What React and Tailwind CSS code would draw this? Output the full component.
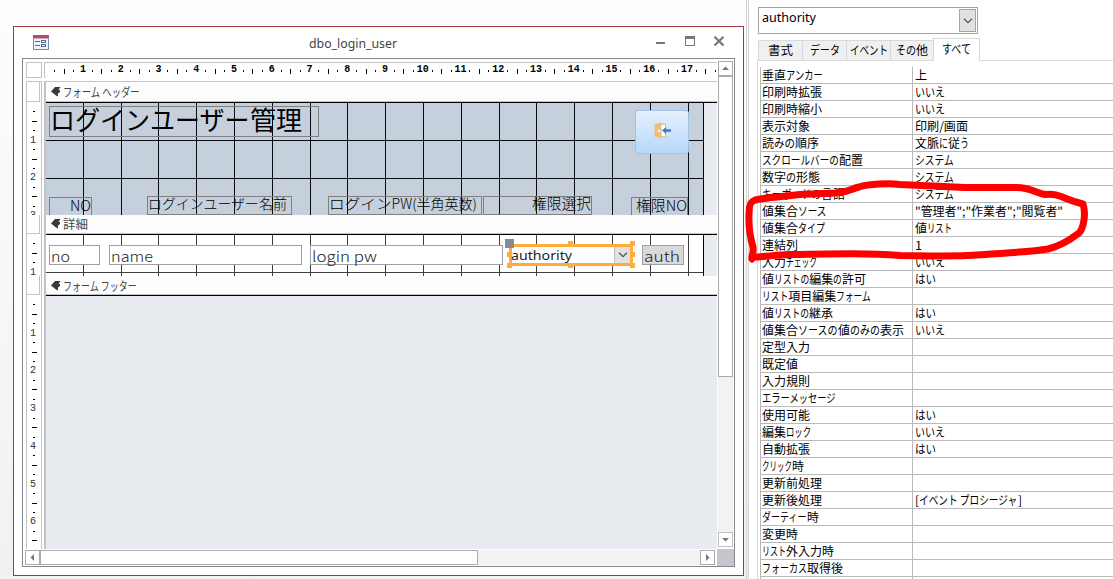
const JP = '"Noto Sans CJK JP"'
const UI = '"Noto Sans"'

const ctx = document.createElement("canvas").getContext("2d")

// Text squeezed to a width: kana are narrowed first, kanji keep their size
const Fit = ({ text, w, size = 12, weight = 400, font = JP, className = "" }) => {
    ctx.font = `${weight} ${size}px ${font}, "Noto Sans CJK JP", sans-serif`
    const parts = text.match(/[\u3040-\u30ff ]+|[^\u3040-\u30ff ]+/g).map((t) => ({
        t,
        kana: /[\u3040-\u30ff]/.test(t),
        w: ctx.measureText(t).width,
    }))
    const mixed = parts.some((p) => p.kana) && parts.some((p) => !p.kana)
    const runs = mixed ? parts : [{ t: text, kana: true, w: ctx.measureText(text).width }]
    const kana = runs.reduce((s, p) => s + (p.kana ? p.w : 0), 0)
    const rest = runs.reduce((s, p) => s + (p.kana ? 0 : p.w), 0)
    const k = (w - rest) / kana
    return <span className={`flex whitespace-pre ${className}`} style={{ width: w, fontSize: size, fontWeight: weight, fontFamily: `${font}, "Noto Sans CJK JP", sans-serif` }}>
        {runs.map((p, i) => (
            <span key={i} className="block shrink-0" style={{ width: p.kana ? p.w * k : p.w }}>
                <span className="block origin-left" style={{ width: p.w, transform: p.kana ? `scaleX(${k})` : "none" }}>{p.t}</span>
            </span>
        ))}
    </span>
}

const HRuler = () => {
    return <div className="flex h-full pl-[5px]">
        {Array.from({ length: 71 }, (_, i) => {
            const q = (i + 1) % 4
            return <div key={i} className="w-[9.449px] shrink-0 flex items-center justify-center">
                {q === 0 && <span className="font-['Liberation_Mono'] text-[10px] leading-none text-black font-bold -mt-px">{(i + 1) / 4}</span>}
                {q === 2 && <span className="w-px h-[5px] bg-black mt-px" />}
                {q % 2 === 1 && <span className="w-px h-[2px] bg-black" />}
            </div>
        })}
    </div>
}

const VRuler = ({ marks }) => {
    return <div className="flex flex-col pt-[4.2px] h-full overflow-hidden">
        {Array.from({ length: marks }, (_, i) => {
            const q = (i + 1) % 4
            return <div key={i} className="h-[9.449px] shrink-0 flex items-center pl-[5px]">
                {q === 0 && <span className="font-['Liberation_Mono'] text-[10px] leading-none text-[#333] -ml-[2px] mt-px">{(i + 1) / 4}</span>}
                {q === 2 && <span className="w-[5px] h-px bg-black" />}
                {q % 2 === 1 && <span className="w-[2px] h-px bg-black ml-px" />}
            </div>
        })}
    </div>
}

const SectionGutter = ({ className, body, marks }) => {
    return <>
        <div className={`shrink-0 pb-px pr-px ${className}`}>
            <div className="h-full border-r border-b border-[#c3c3c3]" />
        </div>
        <div className={`shrink-0 ${body}`}><VRuler marks={marks} /></div>
    </>
}

const SectionBar = ({ text, w, className }) => {
    return <div className={`shrink-0 flex items-center bg-[#fdfdfd] border-b border-black shadow-[inset_0_-1px_#c3c3c3] pl-[5px] ${className}`}>
        <svg width="10" height="10" viewBox="0 0 10 10" className="mr-[2px]">
            <path d="M0 4.500 4 0H9.500L7.500 3H9V5L7 6.500V9.500L5 8.500z" fill="#3b3b3b" />
        </svg>
        <Fit text={text} w={w} className="text-[#444] leading-[16px]" />
    </div>
}

const Grid = ({ h, rows, color }) => {
    return <svg width="658" height={h} className="absolute left-0 top-0" shapeRendering="crispEdges">
        {Array.from({ length: 17 }, (_, i) => (
            <rect key={i} x={Math.floor(45.5 + 37.795 * (i + 1)) - 46} y="0" width="1" height={h} fill={color} />
        ))}
        {rows.map((y) => <rect key={y} x="0" y={y} width="658" height="1" fill={color} />)}
        <rect x="657" y="0" width="1" height={h} fill="#000" />
    </svg>
}

const Arrow = ({ d }) => {
    return <svg width="7" height="7" viewBox="0 0 7 7"><path d={d} fill="#777" /></svg>
}

const Chevron = () => {
    return <svg width="10" height="6" viewBox="0 0 10 6"><path d="M1 .8 5 4.6 9 .8" fill="none" stroke="#555" strokeWidth="1.3" /></svg>
}

const TitleBar = () => {
    return <div className="h-[31px] shrink-0 flex items-start pt-[7px]">
        <svg width="16" height="15" viewBox="0 0 16 15" className="ml-[19px] mt-px" shapeRendering="crispEdges">
            <rect x=".5" y=".5" width="15" height="14" fill="#eef3fa" stroke="#7188a8" />
            <rect width="16" height="3" fill="#b84a6e" />
            <rect y="3" width="16" height="1" fill="#dba5b9" />
            <path d="M2 6h5v1H2zM2 10h5v1H2z" fill="#4c6a98" />
            <path d="M8.500 5.500h4v2h-4zM8.500 9.500h4v2h-4z" fill="#fff" stroke="#4c6a98" />
        </svg>
        <Fit text="dbo_login_user" w={88} size={13} font={UI} className="ml-[260px] leading-[18px] text-[#444]" />
        <svg width="70" height="12" viewBox="0 0 70 12" className="ml-[259px] mt-[2px]" shapeRendering="crispEdges">
            <path d="M0 6h9v2H0z" fill="#777" />
            <path d="M29 0h10v10H29zM30 3v6h8V3z" fill="#777" fillRule="evenodd" />
            <path d="m58.500 .8 9 8.700m0-8.700-9 8.700" stroke="#777" strokeWidth="2.200" fill="none" shapeRendering="auto" />
        </svg>
    </div>
}

const FormHeader = () => {
    return <div className="relative h-[112px] shrink-0 bg-[#e8ebf0] overflow-hidden">
        <div className="w-[658px] h-full bg-[#c5d0dc]" />
        <Grid h={112} rows={[37, 75]} color="#050c14" />
        <div className="absolute left-[3px] top-[3px] w-[270px] h-[31px] border border-[#808080]">
            <Fit text="ログインユーザー管理" w={252} size={26} className="leading-[29px] -mt-[3px] text-black" />
        </div>
        <div className="absolute left-[3px] top-[94px] w-[43px] h-[22px] border border-[#808080] flex justify-end">
            <Fit text="NO" w={21} size={14.500} weight={300} className="leading-[14px]" />
        </div>
        <div className="absolute left-[101px] top-[93px] w-[145px] h-[19px] border border-[#808080]">
            <Fit text="ログインユーザー名前" w={139} size={14} weight={300} className="leading-[14px] -mt-px" />
        </div>
        <div className="absolute left-[282px] top-[93px] w-[154px] h-[19px] border border-[#808080]">
            <Fit text="ログインPW(半角英数)" w={148} size={14} weight={300} className="leading-[14px] -mt-px" />
        </div>
        <div className="absolute left-[437px] top-[93px] w-[109px] h-[19px] border border-[#808080] flex justify-end">
            <Fit text="権限選択" w={59} size={14.500} weight={300} className="leading-[14px] -mt-px" />
        </div>
        <div className="absolute left-[585px] top-[94px] w-[57px] h-[22px] border border-[#808080] flex justify-end">
            <Fit text="権限NO" w={51} size={14.500} weight={300} className="leading-[14px]" />
        </div>
        <div className="absolute left-[589px] top-[7px] w-[54px] h-[44px] rounded-[3px] border border-[#9dc3e8] bg-linear-to-b from-[#e6f0fd] to-[#b5d8fb] flex items-center justify-center">
            <svg width="17" height="17" viewBox="0 0 17 17" className="-mt-[3px]">
                <path d="M7 2.500h4.500v3M7 14h4.500v-3" fill="#fff" stroke="#eabf7c" strokeWidth="1.400" />
                <path d="M7 3h4v11H7z" fill="#fff" />
                <path d="M.5 2 7.500.5v16L.5 14.500z" fill="#eabf7c" />
                <rect x="4" y="8" width="2" height="2" fill="#fff" />
                <path d="M8 8.500 12 5v2.300h5v2.500h-5V12z" fill="#4079b5" />
            </svg>
        </div>
    </div>
}

const Field = ({ text, w, className }) => {
    return <div className={`absolute top-[10px] h-[20px] border border-[#a0a0a0] pl-px ${className}`}>
        <Fit text={text} w={w} size={14.500} weight={300} className="leading-[20px] text-[#222]" />
    </div>
}

const Handle = ({ className }) => {
    return <div className={`absolute size-[5px] bg-[#ffab3d] ${className}`} />
}

const Detail = () => {
    return <div className="relative h-[41px] shrink-0 bg-[#e8ebf0] overflow-hidden">
        <div className="w-[658px] h-full bg-white" />
        <Grid h={41} rows={[37]} color="#3c3c3c" />
        <Field text="no" w={19} className="left-[3px] w-[51px] bg-white" />
        <Field text="name" w={42} className="left-[63px] w-[193px] bg-white" />
        <Field text="login pw" w={65} className="left-[264px] w-[193px] bg-white" />
        <Field text="auth" w={36} className="left-[596px] w-[42px] bg-[#d9d9d9]" />
        <div className="absolute left-[463px] top-[9px] w-[124px] h-[22px] border-3 border-[#ffab3d] bg-white flex justify-between">
            <Fit text="authority" w={61} size={12.500} font={UI} className="leading-[17px] -ml-px text-[#222]" />
            <div className="w-[16px] bg-[#e1e1e1] border-l border-[#c0c0c0] flex items-center justify-center"><Chevron /></div>
        </div>
        <Handle className="left-[522px] top-[6px]" />
        <Handle className="left-[584px] top-[6px]" />
        <Handle className="left-[461px] top-[17px]" />
        <Handle className="left-[584px] top-[17px]" />
        <Handle className="left-[461px] top-[28px]" />
        <Handle className="left-[522px] top-[28px]" />
        <Handle className="left-[584px] top-[28px]" />
        <div className="absolute left-[459px] top-[4px] size-[9px] bg-[#858b94]" />
    </div>
}

const FormWindow = () => {
    return <div className="w-[731px] h-[550px] mt-[26px] ml-[13px] shrink-0 bg-white border border-[#a4373a] flex flex-col">
        <TitleBar />
        <div className="ml-[8px] w-[713px] h-[509px] border border-[#83888f]">
            <div className="flex h-[490px]">
                <div className="w-[694px] shrink-0 flex flex-col">
                    <div className="flex h-[22px] pt-[3px] pl-[3px] shrink-0">
                        <div className="size-[16px] shrink-0 border border-[#c3c3c3] mr-[2px]" />
                        <div className="w-[673px] h-[16px] border-t border-l border-[#c3c3c3]"><HRuler /></div>
                    </div>
                    <div className="flex h-[468px] pl-[3px]">
                        <div className="w-[16px] shrink-0 border-x border-[#c3c3c3] mr-[2px] flex flex-col">
                            <SectionGutter className="h-[22px] border-t border-[#c3c3c3]" body="h-[112px]" marks={12} />
                            <SectionGutter className="h-[20px]" body="h-[41px]" marks={4} />
                            <SectionGutter className="h-[20px]" body="h-[252px]" marks={26} />
                        </div>
                        <div className="w-[673px] shrink-0 border-l-2 border-[#c3c3c3] flex flex-col">
                            <SectionBar text="フォーム ヘッダー" w={77} className="h-[22px] border-t border-t-[#c3c3c3]" />
                            <FormHeader />
                            <SectionBar text="詳細" w={25} className="h-[20px] pb-px" />
                            <Detail />
                            <SectionBar text="フォーム フッター" w={74} className="h-[20px]" />
                            <div className="grow bg-[#e8ebf0]" />
                        </div>
                    </div>
                </div>
                <div className="w-[15px] ml-px mt-[2px] h-[486px] bg-[#f2f2f2] flex flex-col">
                    <div className="h-[15px] border border-[#ababab] bg-white flex items-center justify-center"><Arrow d="M0 5 3.500 1.500 7 5z" /></div>
                    <div className="h-[301px] border border-[#ababab] bg-white" />
                    <div className="h-[15px] mt-auto border border-[#c0c0c0] bg-white flex items-center justify-center"><Arrow d="M0 2 3.500 5.500 7 2z" /></div>
                </div>
            </div>
            <div className="flex h-[17px]">
                <div className="w-[690px] h-[15px] ml-[2px] mt-px mr-[2px] bg-[#f2f2f2] flex">
                    <div className="w-[15px] border border-[#ababab] bg-white flex items-center justify-center"><Arrow d="M5 0 1.500 3.500 5 7z" /></div>
                    <div className="w-[438px] border border-[#ababab] bg-white" />
                    <div className="w-[15px] ml-auto border border-[#ababab] bg-white flex items-center justify-center"><Arrow d="M2 0 5.500 3.500 2 7z" /></div>
                </div>
                <div className="w-[17px] bg-[#c4c6cb]" />
            </div>
        </div>
    </div>
}

const rows = [
    ["垂直アンカー", 61, "上", 12],
    ["印刷時拡張", 60, "いいえ", 30],
    ["印刷時縮小", 60, "いいえ", 30],
    ["表示対象", 48, "印刷/画面", 53],
    ["読みの順序", 57, "文脈に従う", 54],
    ["スクロールバーの配置", 101, "システム", 39],
    ["数字の形態", 58, "システム", 39],
    ["キーボードの言語", 83, "システム", 39],
    ["値集合ソース", 65, "\"管理者\";\"作業者\";\"閲覧者\"", 148],
    ["値集合タイプ", 63, "値リスト", 37],
    ["連結列", 36, "1", 7],
    ["入力チェック", 55, "いいえ", 30],
    ["値リストの編集の許可", 104, "はい", 21],
    ["リスト項目編集フォーム", 109, "", 0],
    ["値リストの継承", 71, "はい", 21],
    ["値集合ソースの値のみの表示", 142, "いいえ", 30],
    ["定型入力", 48, "", 0],
    ["既定値", 36, "", 0],
    ["入力規則", 48, "", 0],
    ["エラーメッセージ", 74, "", 0],
    ["使用可能", 48, "はい", 21],
    ["編集ロック", 49, "いいえ", 30],
    ["自動拡張", 48, "はい", 21],
    ["クリック時", 42, "", 0],
    ["更新前処理", 60, "", 0],
    ["更新後処理", 60, "[イベント プロシージャ]", 107],
    ["ダーティー時", 57, "", 0],
    ["変更時", 36, "", 0],
    ["リスト外入力時", 72, "", 0],
    ["フォーカス取得後", 81, "", 0],
    ["", 0, "", 0],
]

const tabs = [
    { name: "書式", w: 25, cls: "w-[44px]" },
    { name: "データ", w: 30, cls: "w-[44px]" },
    { name: "イベント", w: 38, cls: "w-[44px]" },
    { name: "その他", w: 32, cls: "w-[43px]" },
]

const PropertySheet = () => {
    return <div className="grow h-full ml-px border-l border-[#d4d4d4] bg-white pl-[8px] overflow-hidden flex flex-col">
        <div className="mt-[7px] ml-px w-[220px] h-[27px] shrink-0 border border-[#a5a5a9] flex justify-between p-px">
            <Fit text="authority" w={54} size={13} font={UI} className="leading-[17px] ml-[2px] text-black" />
            <div className="w-[17px] h-[23px] border border-[#a5a5a9] bg-[#e1e1e1] flex items-center justify-center"><Chevron /></div>
        </div>
        <div className="flex items-end h-[23px] mt-[4px] ml-px shrink-0">
            {tabs.map((t) => (
                <div key={t.name} className={`${t.cls} h-[20px] mb-[1px] bg-[#f0f0f0] border-t border-l border-[#d9d9d9] flex justify-center`}>
                    <Fit text={t.name} w={t.w} className="leading-[18px] text-black" />
                </div>
            ))}
            <div className="w-[47px] h-[23px] border border-b-0 border-[#d9d9d9] bg-white flex justify-center z-10">
                <Fit text="すべて" w={30} className="leading-[20px] text-black" />
            </div>
        </div>
        <div className="-mt-px grow border-l border-t border-[#d9d9d9] pt-[6px] pl-[2px]">
            <div className="border-l border-[#b9b9b9]">
                {rows.map(([name, w, value, vw], i) => (
                    <div key={i} className="flex h-[17px] border-b border-[#b9b9b9]">
                        <div className="w-[152px] shrink-0 border-r border-[#b9b9b9] pl-px">
                            {name && <Fit text={name} w={w} className="leading-[16px] text-black" />}
                        </div>
                        <div className="pl-[2px]">
                            {value && <Fit text={value} w={vw} className="leading-[16px] text-black" />}
                        </div>
                    </div>
                ))}
            </div>
        </div>
    </div>
}

export default function App() {
    return <div className="relative w-[1113px] h-[579px] overflow-hidden flex bg-linear-to-b from-[#fdfdfd] to-[#f1f1f1]">
        <FormWindow />
        <div className="w-[2px] shrink-0 ml-[1px] h-full border-r border-[#d4d4d4]" />
        <PropertySheet />
        {/* hand drawn marker */}
        <svg width="1113" height="579" className="absolute left-0 top-0 pointer-events-none">
            <path d="M752 259C751 257 754 253 753 247C750 237 748 222 749.500 207C750 202 753 200 760 199C775 197 788 196 800 194.500L835 193C850 192 850 189 859 187C868 184 890 183 900 184.500L965 187.500H1015C1030 187 1036 193 1045 194.500C1060 193 1062 199 1083 204C1086 213 1084 228 1079 233C1070 240 1060 246 1048 249C1030 252 1005 253 985 254.500C960 257 920 255.500 900 255.500C870 253 840 253.500 790 254.500C775 255 763 257 752 257" fill="none" stroke="#ff0000" strokeWidth="7" strokeLinecap="round" strokeLinejoin="round" />
        </svg>
    </div>
}
